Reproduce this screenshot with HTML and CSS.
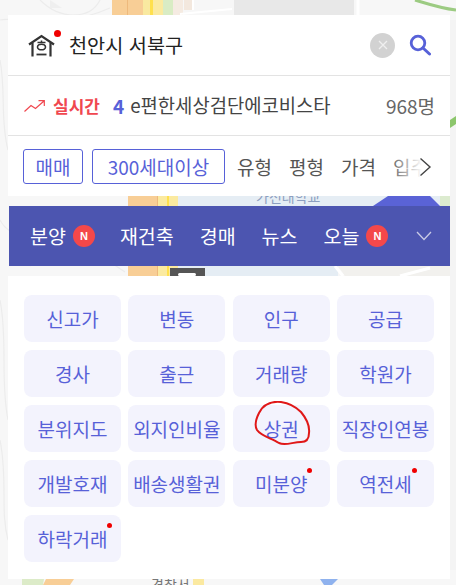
FILE: index.html
```html
<!DOCTYPE html>
<html lang="ko">
<head>
<meta charset="utf-8">
<title>천안시 서북구</title>
<link rel="stylesheet" href="styles.css">
</head>
<body>
<svg class="map" width="456" height="585" viewBox="0 0 456 585" aria-hidden="true">
  <rect width="456" height="585" fill="#f7f7f7"/>
  <g fill="none" stroke="#ececec" stroke-width="1.2">
    <path d="M0 20C30 15 60 30 110 8M40 0C60 20 90 20 100 0M0 60C6 90 0 120 8 150M0 220C10 240 30 230 60 260M30 266C50 250 80 240 125 272"/>
    <path d="M0 300C8 340 0 380 8 420M0 440C8 480 0 510 8 540"/>
  </g>
  <path d="M50 0L62 8L50 8Z" fill="#efefef"/>
  <rect x="112" y="0" width="31" height="16" fill="#f8ce96"/>
  <rect x="127" y="0" width="1" height="16" fill="#eeb97c"/>
  <rect x="128" y="196" width="29" height="80" fill="#f8ce96"/>
  <rect x="157" y="196" width="1" height="80" fill="#eeb97c"/>
  <rect x="143" y="0" width="7" height="16" fill="#f9e9a0"/>
  <rect x="150" y="0" width="3" height="16" fill="#ffe04d"/>
  <rect x="153" y="0" width="10" height="16" fill="#fbeaa0"/>
  <rect x="163" y="0" width="10" height="16" fill="#d9ecc4"/>
  <rect x="173" y="0" width="10" height="16" fill="#f5ebe2"/>
  <rect x="184" y="0" width="9" height="10" fill="#f3e8de"/>
  <path d="M180 14L232 9M193 0V10" stroke="#fff" stroke-width="2" fill="none"/>
  <rect x="234" y="0" width="120" height="16" fill="#e8e8e8"/>
  <path d="M358 0V16" stroke="#fff" stroke-width="3"/>
  <path d="M415 0C425 3 440 8 456 10" stroke="#9ccb82" stroke-width="3" fill="none"/>
  <rect x="158" y="196" width="20" height="80" fill="#fbeaa0"/>
  <rect x="167" y="196" width="2" height="80" fill="#ffe04d"/>
  <rect x="178" y="196" width="262" height="10" fill="#e5edf4"/>
  <rect x="178" y="266" width="160" height="10" fill="#e5edf4"/>
  <path d="M373 206L388 196H430L440 206Z" fill="#5a63d6"/>
  <path d="M440 196H456V270H440Z" fill="#dcebcf"/>
  <path d="M338 266H456V276H345Z" fill="#f2f1ee"/>
  <path d="M335 266L343 276M400 276L430 268" stroke="#fff" stroke-width="3" fill="none"/>
  <rect x="170" y="268" width="35" height="8" fill="#555"/>
  <rect x="178" y="273" width="18" height="3" rx="1.500" fill="#fff"/>
  <path d="M22 579H44L43 585H22Z" fill="#dcebc8"/>
  <path d="M46 579H74L70 585H43Z" fill="#f8ce96"/>
  <rect x="193" y="579" width="11" height="6" fill="#fbe9a0"/>
  <path d="M320 579H338L332 585H324Z" fill="#8fb2ee"/>
  <path d="M450 20H456V570H450Z" fill="#f4f4f4"/>
  <path d="M450 120L456 116V124L450 128Z" fill="#8cc66c"/>
  <text x="256" y="202" class="map-label">가천대학교</text>
  <text x="151" y="590" class="map-label map-label-dark">경찰서</text>
</svg>

<main class="panel">
  <section class="card">
    <div class="search">
      <span class="logo">
        <svg width="27" height="23" viewBox="0 0 27 23"><path d="M1 10.500L13.500 2L26 10.500" fill="none" stroke="#333" stroke-width="2.200"/><path d="M4.500 9V22.500M22.500 9V22.500" stroke="#333" stroke-width="2.200"/><path d="M9.500 8.500H17.500M13.500 6.500V8.500" stroke="#333" stroke-width="1.500"/><ellipse cx="13.500" cy="13" rx="4" ry="2.800" fill="none" stroke="#333" stroke-width="1.600"/><path d="M8.500 20.500H18.500" stroke="#333" stroke-width="1.800"/></svg>
        <i class="dot dot-logo"></i>
      </span>
      <span class="place">천안시 서북구</span>
      <span class="clear"><svg width="10" height="10" viewBox="0 0 10 10"><path d="M1 1L9 9M9 1L1 9" stroke="#efefef" stroke-width="1.300"/></svg></span>
      <svg class="magnifier" width="22" height="22" viewBox="0 0 22 22"><circle cx="9" cy="9" r="6.800" fill="none" stroke="#5761d8" stroke-width="2.800"/><path d="M14 14L20.500 20" stroke="#5761d8" stroke-width="3" stroke-linecap="round"/></svg>
    </div>
    <div class="live">
      <svg class="trend" width="21" height="12" viewBox="0 0 21 12"><path d="M0.500 11.500L7 5.500L11.500 8.500L20 1M14.500 0.700H20.300V6" fill="none" stroke="#f0474f" stroke-width="1.200"/></svg>
      <strong class="live-label">실시간</strong>
      <strong class="rank">4</strong>
      <span class="apt">e편한세상검단에코비스타</span>
      <span class="count">968명</span>
    </div>
    <div class="filters">
      <span class="chip">매매</span>
      <span class="chip chip-wide">300세대이상</span>
      <span class="filter">유형</span>
      <span class="filter">평형</span>
      <span class="filter">가격</span>
      <span class="filter">입주</span>
      <span class="fade"></span>
      <svg class="next" width="13" height="20" viewBox="0 0 13 20"><path d="M1.500 1.500L11 10L1.500 18.500" fill="none" stroke="#444" stroke-width="1.400"/></svg>
    </div>
  </section>

  <nav class="tabs">
    <span class="tab tab-new">분양<b class="new">N</b></span>
    <span class="tab">재건축</span>
    <span class="tab">경매</span>
    <span class="tab">뉴스</span>
    <span class="tab">오늘<b class="new">N</b></span>
    <svg class="chevron" width="16" height="10" viewBox="0 0 16 10"><path d="M1 1L8 8.500L15 1" fill="none" stroke="#c9cbe6" stroke-width="1.300"/></svg>
  </nav>

  <section class="card grid">
    <span class="cell">신고가</span>
    <span class="cell">변동</span>
    <span class="cell">인구</span>
    <span class="cell">공급</span>
    <span class="cell">경사</span>
    <span class="cell">출근</span>
    <span class="cell">거래량</span>
    <span class="cell">학원가</span>
    <span class="cell">분위지도</span>
    <span class="cell">외지인비율</span>
    <span class="cell">상권
      <svg class="scribble" width="60" height="50" viewBox="0 0 60 50"><path d="M30 1C20 0 12 4 8 12C5 18 3 24 6 29C10 35 20 37 28 42C34 45 42 41 50 41C55 41 58 38 58 32C59 24 55 17 50 11C44 5 37 2 30 1Z" fill="none" stroke="#e01818" stroke-width="2"/></svg>
    </span>
    <span class="cell">직장인연봉</span>
    <span class="cell">개발호재</span>
    <span class="cell">배송생활권</span>
    <span class="cell"><span class="marked">미분양<i class="dot dot-cell"></i></span></span>
    <span class="cell"><span class="marked">역전세<i class="dot dot-cell"></i></span></span>
    <span class="cell"><span class="marked">하락거래<i class="dot dot-cell"></i></span></span>
  </section>
</main>
</body>
</html>
```

FILE: styles.css
```css
* { box-sizing: border-box; }

html, body {
  margin: 0;
  height: 585px;
  overflow: hidden;
}

body {
  position: relative;
  font-family: "Noto Sans CJK KR", "Noto Sans", sans-serif;
  font-size: 19px;
  line-height: 1;
  color: #333;
}

.map {
  position: absolute;
  left: 0;
  top: 0;
}

.map-label {
  font-family: "Noto Sans CJK KR", sans-serif;
  font-size: 14px;
  fill: #8d9fc0;
}

.map-label-dark { fill: #777; }

.panel {
  position: relative;
  width: 442px;
  margin: 15px 0 0 8px;
}

.card { background: #fff; }

.search {
  display: flex;
  align-items: center;
  height: 61px;
  padding: 0 19px 0 20px;
  border-bottom: 1px solid #e3e3e3;
}

.logo {
  position: relative;
  display: flex;
  width: 27px;
  height: 23px;
  margin-right: 14px;
}

.dot {
  position: absolute;
  display: block;
  border-radius: 50%;
  background: #f00000;
}

.dot-logo {
  left: 26px;
  top: -4px;
  width: 7px;
  height: 7px;
}

.place {
  flex: 1;
  font-size: 19.700px;
  color: #222;
}

.clear {
  display: flex;
  align-items: center;
  justify-content: center;
  width: 25px;
  height: 25px;
  margin-right: 14px;
  border-radius: 50%;
  background: #d2d2d2;
}

.live {
  display: flex;
  align-items: center;
  height: 60px;
  padding: 0 15px 0 16px;
  border-bottom: 1px solid #e3e3e3;
}

.trend { margin-right: 8px; }

.live-label {
  margin-right: 13px;
  font-size: 17px;
  color: #f0474f;
}

.rank {
  margin-right: 6px;
  color: #5761d8;
}

.apt {
  flex: 1;
  font-size: 18.800px;
  color: #444;
}

.count { color: #666; }

.filters {
  position: relative;
  display: flex;
  align-items: center;
  gap: 17px;
  height: 60px;
  padding: 0 15px;
  overflow: hidden;
  color: #555;
}

.chip {
  display: flex;
  align-items: center;
  justify-content: center;
  flex: none;
  width: 60px;
  height: 35px;
  margin-right: -8px;
  border: 1px solid #5761d8;
  border-radius: 3px;
  color: #5761d8;
}

.chip-wide {
  width: 133px;
  margin-right: -5px;
}

.filter { flex: none; }

.fade {
  position: absolute;
  right: 0;
  top: 0;
  width: 62px;
  height: 60px;
  background: linear-gradient(to right, rgba(255, 255, 255, 0), #fff 55%);
}

.next {
  position: absolute;
  right: 18px;
  top: 21px;
}

.tabs {
  display: flex;
  align-items: center;
  gap: 26px;
  height: 60px;
  margin: 10px 0 10px 1px;
  padding: 0 18px 0 21px;
  background: #4c55b0;
  color: #fff;
  font-size: 19.500px;
  white-space: nowrap;
}

.tab {
  display: flex;
  align-items: center;
  flex: none;
  gap: 7px;
}

.tab-new { margin-right: -1px; }

.new {
  display: flex;
  align-items: center;
  justify-content: center;
  width: 22px;
  height: 22px;
  border-radius: 50%;
  background: #f4484a;
  font-family: "Liberation Sans", sans-serif;
  font-size: 11px;
  color: #fff;
}

.chevron {
  flex: none;
  margin-left: auto;
}

.grid {
  display: grid;
  grid-template-columns: repeat(4, 97px);
  grid-auto-rows: 47px;
  gap: 8px 7.330px;
  height: 303px;
  padding: 19px 16px 0;
}

.cell {
  position: relative;
  display: flex;
  align-items: center;
  justify-content: center;
  border-radius: 8px;
  background: #f3f3fd;
  color: #5761d8;
  white-space: nowrap;
}

.marked { position: relative; }

.dot-cell {
  right: -5px;
  top: -6px;
  width: 5px;
  height: 5px;
}

.scribble {
  position: absolute;
  left: 18px;
  top: -4px;
}
```
